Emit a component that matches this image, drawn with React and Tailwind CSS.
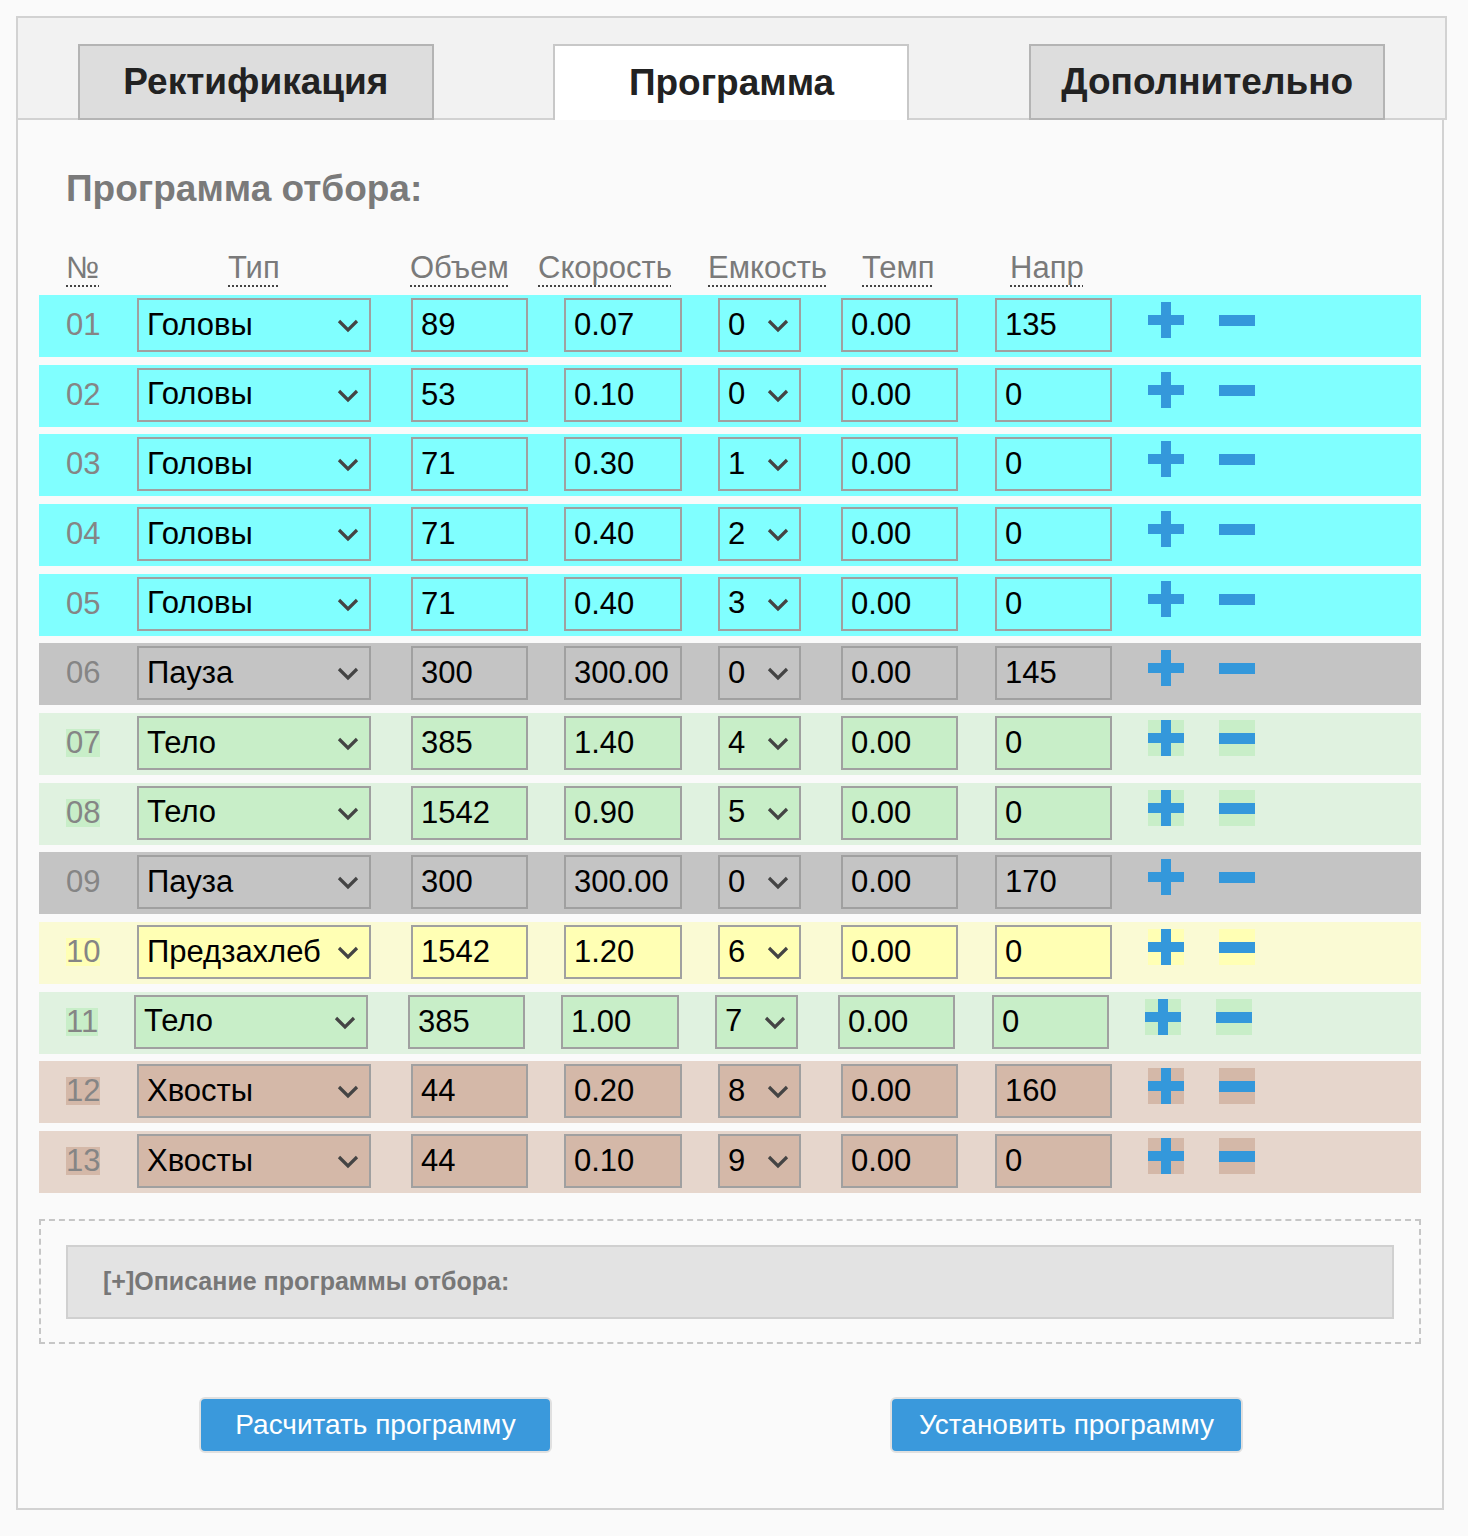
import { useState } from "react";

const TYPES = ["Головы", "Пауза", "Тело", "Предзахлеб", "Хвосты"];
const TANKS = ["0", "1", "2", "3", "4", "5", "6", "7", "8", "9"];

const THEMES = {
  Головы: { row: "bg-[#80ffff]", field: "bg-[#80ffff]" },
  Пауза: { row: "bg-[#c4c4c4]", field: "bg-[#c4c4c4]" },
  Тело: { row: "bg-[#e0f2e0]", field: "bg-[#c8eec8]" },
  Предзахлеб: { row: "bg-[#fafad4]", field: "bg-[#ffffb4]" },
  Хвосты: { row: "bg-[#e6d6cc]", field: "bg-[#d4b8a8]" },
};

const ROWS = [
  { n: "01", type: "Головы", vol: "89", speed: "0.07", tank: "0", temp: "0.00", dir: "135" },
  { n: "02", type: "Головы", vol: "53", speed: "0.10", tank: "0", temp: "0.00", dir: "0" },
  { n: "03", type: "Головы", vol: "71", speed: "0.30", tank: "1", temp: "0.00", dir: "0" },
  { n: "04", type: "Головы", vol: "71", speed: "0.40", tank: "2", temp: "0.00", dir: "0" },
  { n: "05", type: "Головы", vol: "71", speed: "0.40", tank: "3", temp: "0.00", dir: "0" },
  { n: "06", type: "Пауза", vol: "300", speed: "300.00", tank: "0", temp: "0.00", dir: "145" },
  { n: "07", type: "Тело", vol: "385", speed: "1.40", tank: "4", temp: "0.00", dir: "0" },
  { n: "08", type: "Тело", vol: "1542", speed: "0.90", tank: "5", temp: "0.00", dir: "0" },
  { n: "09", type: "Пауза", vol: "300", speed: "300.00", tank: "0", temp: "0.00", dir: "170" },
  { n: "10", type: "Предзахлеб", vol: "1542", speed: "1.20", tank: "6", temp: "0.00", dir: "0" },
  { n: "11", type: "Тело", vol: "385", speed: "1.00", tank: "7", temp: "0.00", dir: "0", shift: true },
  { n: "12", type: "Хвосты", vol: "44", speed: "0.20", tank: "8", temp: "0.00", dir: "160" },
  { n: "13", type: "Хвосты", vol: "44", speed: "0.10", tank: "9", temp: "0.00", dir: "0" },
];

const FONT = { fontFamily: '"Liberation Sans", Arial, Helvetica, sans-serif' };
const FIELD = "h-[54px] border-2 border-[#a0a0a0] text-[31px] text-black outline-none";

function Pick({ value, options, bg, className }) {
  return (
    <div className={`relative mt-[3px] ${className}`}>
      <select defaultValue={value} className={`${FIELD} ${bg} w-full appearance-none pl-[8px]`}>
        {options.map((o) => (
          <option key={o}>{o}</option>
        ))}
      </select>
      <svg
        className="pointer-events-none absolute right-[12px] top-[21px]"
        width="22"
        height="14"
        viewBox="0 0 22 14"
      >
        <path d="M2 2l9 9 9-9" stroke="#444" strokeWidth="3.2" fill="none" />
      </svg>
    </div>
  );
}

function Field({ value, bg, className }) {
  return (
    <input
      defaultValue={value}
      className={`${FIELD} ${bg} mt-[3px] pl-[8px] ${className}`}
    />
  );
}

function Plus({ bg }) {
  return (
    <button className={`mt-[7px] ml-[36px] size-[36px] ${bg}`}>
      <svg width="36" height="36" viewBox="0 0 36 36">
        <rect x="13" y="0" width="10" height="36" fill="#3498db" />
        <rect x="0" y="13" width="36" height="10" fill="#3498db" />
      </svg>
    </button>
  );
}

function Minus({ bg }) {
  return (
    <button className={`mt-[7px] ml-[35px] size-[36px] ${bg}`}>
      <svg width="36" height="36" viewBox="0 0 36 36">
        <rect x="0" y="13" width="36" height="11" fill="#3498db" />
      </svg>
    </button>
  );
}

function Row({ r }) {
  const t = THEMES[r.type];
  return (
    <div className={`flex h-[62px] items-start ${t.row}`}>
      <div className={`${r.shift ? "w-[95px]" : "w-[98px]"} shrink-0 pl-[27px] pt-[16px]`}>
        <span className={`inline-block h-[28px] text-[31px] leading-[28px] text-[#858585] ${t.field}`}>
          {r.n}
        </span>
      </div>
      <Pick value={r.type} options={TYPES} bg={t.field} className="w-[234px]" />
      <Field value={r.vol} bg={t.field} className="ml-[40px] w-[117px]" />
      <Field value={r.speed} bg={t.field} className="ml-[36px] w-[118px]" />
      <Pick value={r.tank} options={TANKS} bg={t.field} className="ml-[36px] w-[83px]" />
      <Field value={r.temp} bg={t.field} className="ml-[40px] w-[117px]" />
      <Field value={r.dir} bg={t.field} className="ml-[37px] w-[117px]" />
      <Plus bg={t.field} />
      <Minus bg={t.field} />
    </div>
  );
}

const HEADS = [
  ["№", "w-[162px]"],
  ["Тип", "w-[182px]"],
  ["Объем", "w-[128px]"],
  ["Скорость", "w-[170px]"],
  ["Емкость", "w-[154px]"],
  ["Темп", "w-[148px]"],
  ["Напр", "w-[120px]"],
];

export default function App() {
  const [tab, setTab] = useState(1);
  const tabs = ["Ректификация", "Программа", "Дополнительно"];

  return (
    <div className="min-h-screen bg-[#fafafa] pl-4 pt-4" style={FONT}>
      <div className="w-[1431px]">
        {/* tabs */}
        <div className="grid h-[104px] grid-cols-3 items-end border-2 border-[#d2d2d2] bg-[#f2f2f2]">
          {tabs.map((name, i) => (
            <div key={name} className="flex justify-center">
              <button
                onClick={() => setTab(i)}
                className={
                  i === tab
                    ? "-mb-[2px] h-[76px] w-[356px] border-2 border-b-0 border-[#c8c8c8] bg-white text-[37px] font-bold text-[#222]"
                    : "-mb-[2px] h-[76px] w-[356px] border-2 border-[#b4b4b4] bg-[#dddddd] text-[37px] font-bold text-[#222]"
                }
              >
                {name}
              </button>
            </div>
          ))}
        </div>

        {/* panel */}
        <div className="h-[1390px] w-[1428px] border-2 border-t-0 border-[#d2d2d2] bg-[#fafafa] px-[21px] pt-[49px]">
          <h2 className="pl-[27px] text-[37px] leading-[40px] font-bold text-[#7a7a7a]">
            Программа отбора:
          </h2>

          <div className="mt-[41px] flex h-[36px] pl-[27px] text-[31px] leading-[36px] text-[#7a7a7a]">
            {HEADS.map(([h, w]) => (
              <div key={h} className={w}>
                <span className="underline decoration-dotted decoration-[#444] decoration-[2px] underline-offset-[7px]">
                  {h}
                </span>
              </div>
            ))}
          </div>

          <div className="mt-[9px] flex flex-col gap-[7.67px]">
            {ROWS.map((r) => (
              <Row key={r.n} r={r} />
            ))}
          </div>

          <div className="mt-[26px] h-[125px] border-2 border-dashed border-[#c6c6c6] px-[25px] pt-[24px]">
            <div className="flex h-[74px] items-center border-2 border-[#d0d0d0] bg-[#e3e3e3] pl-[35px] text-[25px] font-bold text-[#777]">
              [+]Описание программы отбора:
            </div>
          </div>

          <div className="mt-[53px] flex pl-[160px]">
            <button className="h-[56px] w-[353px] rounded-[6px] border-2 border-[#e0e0e0] bg-[#3a99dc] text-[28px] text-white">
              Расчитать программу
            </button>
            <button className="ml-[338px] h-[56px] w-[353px] rounded-[6px] border-2 border-[#e0e0e0] bg-[#3a99dc] text-[28px] text-white">
              Установить программу
            </button>
          </div>
        </div>
      </div>
    </div>
  );
}
